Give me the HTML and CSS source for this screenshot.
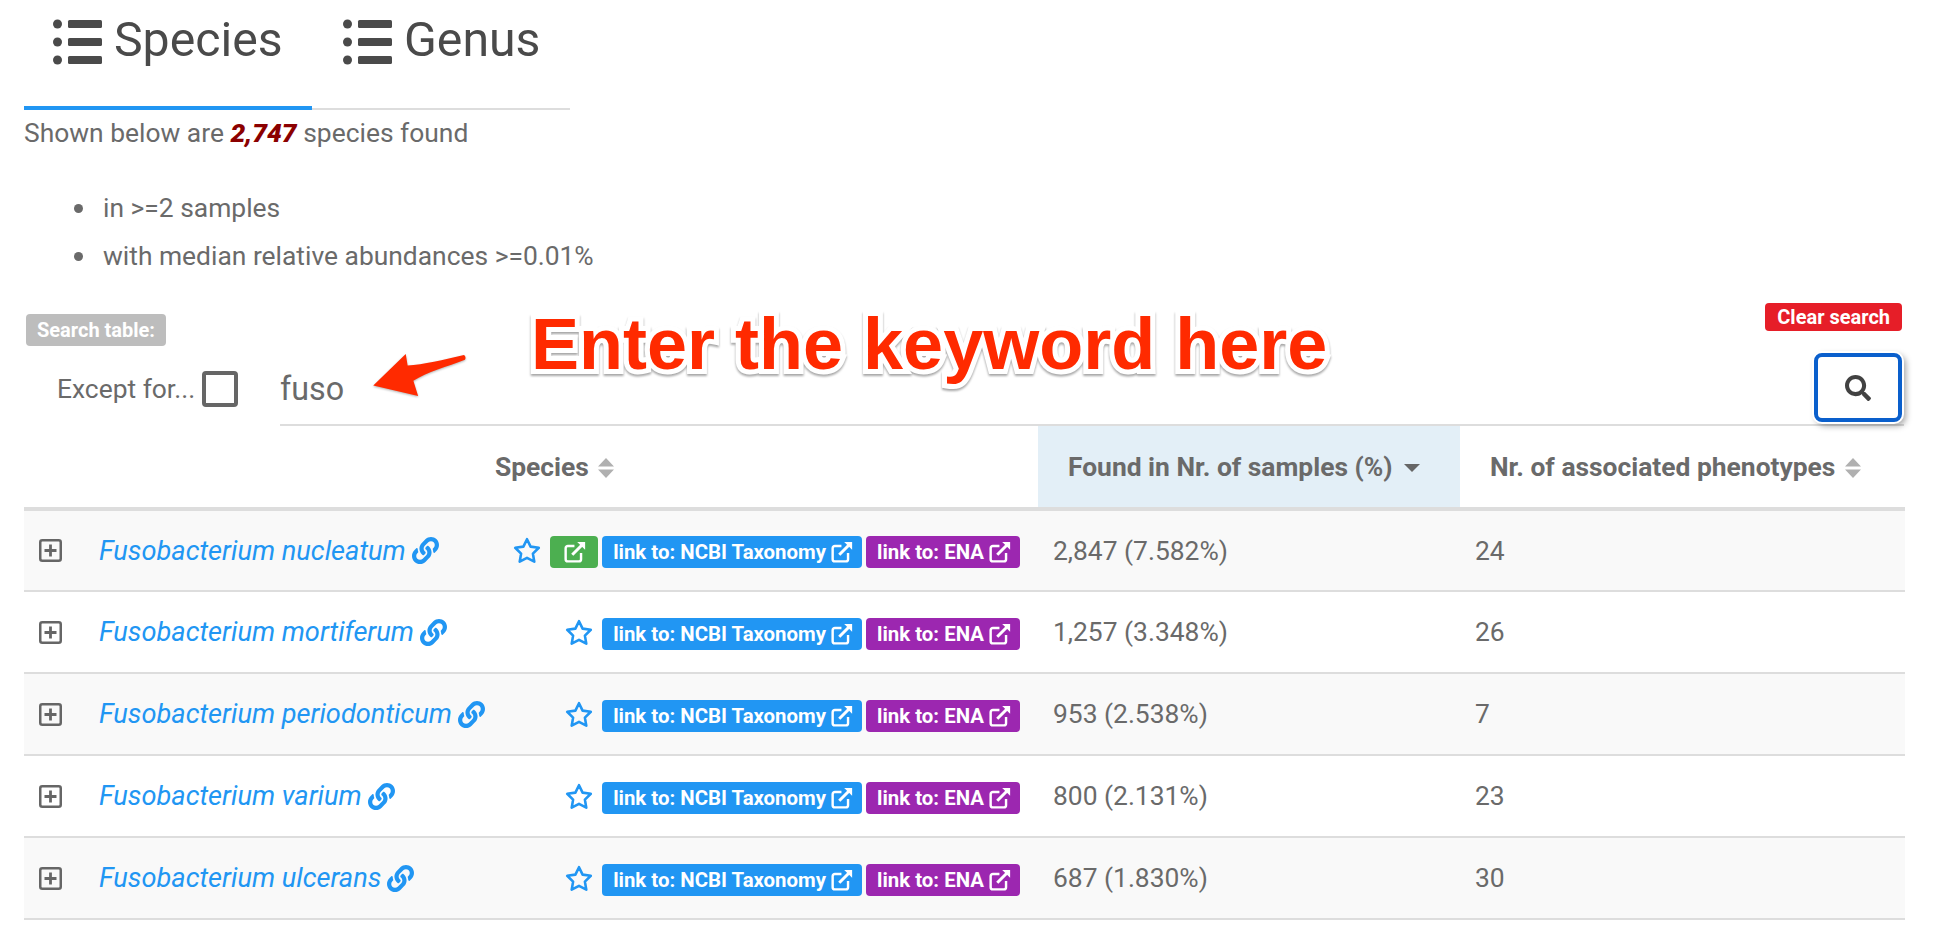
FILE: index.html
```html
<!DOCTYPE html>
<html>
  <head>
    <meta charset="utf-8">
    <title>Species</title>
    <link rel="stylesheet" href="styles.css">
  </head>
  <body>
    <svg class="defs" width="0" height="0">
      <symbol id="i-list" viewBox="0 0 49 46">
        <circle cx="4.5" cy="5" r="4.5"/><circle cx="4.5" cy="23" r="4.5"/><circle cx="4.5" cy="41" r="4.5"/>
        <rect x="15" y="1" width="34" height="8" rx="1.5"/><rect x="15" y="19" width="34" height="8" rx="1.5"/><rect x="15" y="37" width="34" height="8" rx="1.5"/>
      </symbol>
      <symbol id="i-link" viewBox="0 0 512 512">
        <path d="M326.612 185.391c59.747 59.809 58.927 155.698.36 214.59-.11.12-.24.25-.36.37l-67.2 67.2c-59.27 59.27-155.699 59.262-214.96 0-59.27-59.26-59.27-155.7 0-214.96l37.106-37.106c9.84-9.84 26.786-3.3 27.294 10.606.648 17.722 3.826 35.527 9.69 52.721 1.986 5.822.567 12.262-3.783 16.612l-13.087 13.087c-28.026 28.026-28.905 73.66-1.155 101.96 28.024 28.579 74.086 28.749 102.325.51l67.2-67.19c28.191-28.191 28.073-73.757 0-101.83-3.701-3.694-7.429-6.564-10.341-8.569a16.037 16.037 0 0 1-6.947-12.606c-.396-10.567 3.348-21.456 11.698-29.806l21.054-21.055c5.521-5.521 14.182-6.199 20.584-1.731a152.482 152.482 0 0 1 20.522 17.197zM467.547 44.449c-59.261-59.262-155.69-59.27-214.96 0l-67.2 67.2c-.12.12-.25.25-.36.37-58.566 58.892-59.387 154.781.36 214.59a152.454 152.454 0 0 0 20.521 17.196c6.402 4.468 15.064 3.789 20.584-1.731l21.054-21.055c8.35-8.35 12.094-19.239 11.698-29.806a16.037 16.037 0 0 0-6.947-12.606c-2.912-2.005-6.64-4.875-10.341-8.569-28.073-28.073-28.191-73.639 0-101.83l67.2-67.19c28.239-28.239 74.3-28.069 102.325.51 27.75 28.3 26.872 73.934-1.155 101.96l-13.087 13.087c-4.35 4.35-5.769 10.79-3.783 16.612 5.864 17.194 9.042 34.999 9.69 52.721.509 13.906 17.454 20.446 27.294 10.606l37.106-37.106c59.271-59.259 59.271-155.699.001-214.959z"/>
      </symbol>
      <symbol id="i-star" viewBox="0 0 28 27">
        <path d="M14 2.200l3.600 7.400 8.200 1.200-5.900 5.800 1.400 8.100-7.300-3.800-7.300 3.800 1.400-8.100-5.900-5.800 8.200-1.200z" fill="none" stroke="currentColor" stroke-width="2.600" stroke-linejoin="round"/>
      </symbol>
      <symbol id="i-ext" viewBox="0 0 20 20">
        <path d="M15.500 11v5.500a2 2 0 0 1-2 2h-10a2 2 0 0 1-2-2v-10a2 2 0 0 1 2-2h6" fill="none" stroke="currentColor" stroke-width="2.200"/>
        <path d="M7.500 12.500l10-10" fill="none" stroke="currentColor" stroke-width="2.800"/>
        <path d="M12 .8h7.200V8z" fill="currentColor"/>
      </symbol>
      <symbol id="i-sort" viewBox="0 0 16 22">
        <path d="M8 1l8 8.500H0zM8 21l-8-8.500h16z"/>
      </symbol>
      <symbol id="i-plus" viewBox="0 0 23 23">
        <rect x="1.250" y="1.250" width="20.500" height="20.500" rx="2" fill="none" stroke="currentColor" stroke-width="2.500"/>
        <path d="M11.500 5.500v12M5.500 11.500h12" fill="none" stroke="currentColor" stroke-width="2.800"/>
      </symbol>
      <symbol id="i-search" viewBox="0 0 512 512">
        <path d="M505 442.7L405.3 343c-4.5-4.5-10.6-7-17-7H372c27.6-35.3 44-79.7 44-128C416 93.1 322.9 0 208 0S0 93.1 0 208s93.1 208 208 208c48.3 0 92.7-16.4 128-44v16.3c0 6.4 2.5 12.5 7 17l99.7 99.7c9.4 9.4 24.6 9.4 33.9 0l28.3-28.3c9.4-9.4 9.4-24.6.1-34zM208 336c-70.7 0-128-57.2-128-128 0-70.7 57.2-128 128-128 70.7 0 128 57.2 128 128 0 70.7-57.2 128-128 128z"/>
      </symbol>
    </svg>

    <div class="tabs">
      <a class="tab active"><svg class="tab-icon"><use href="#i-list"/></svg>Species</a>
      <a class="tab"><svg class="tab-icon"><use href="#i-list"/></svg>Genus</a>
    </div>

    <p class="summary">Shown below are <b>2,747</b> species found</p>
    <ul class="filters">
      <li>in &gt;=2 samples</li>
      <li>with median relative abundances &gt;=0.01%</li>
    </ul>

    <div class="search">
      <div class="search-left">
        <span class="search-label">Search table:</span>
        <label class="except">Except for...<span class="checkbox"></span></label>
      </div>
      <div class="search-field">fuso</div>
      <div class="search-right">
        <span class="clear">Clear search</span>
        <span class="search-btn"><svg><use href="#i-search"/></svg></span>
      </div>

      <!-- annotation drawn on top of the screenshot -->
      <svg class="note-arrow" viewBox="0 0 100 44">
        <path d="M0 33L34 0 36 12C52 11 74 6 95 1 97 2 97 5 96 6 78 13 56 19 42 28L47 44Z"/>
      </svg>
      <div class="note-text">Enter the keyword here</div>
    </div>

    <table class="results">
      <thead>
        <tr>
          <th class="col-species">Species <svg class="sort"><use href="#i-sort"/></svg></th>
          <th class="col-found sorted">Found in Nr. of samples (%) <span class="caret"></span></th>
          <th class="col-pheno">Nr. of associated phenotypes <svg class="sort"><use href="#i-sort"/></svg></th>
        </tr>
      </thead>
      <tbody>
        <tr>
          <td>
            <div class="species">
              <svg class="plus"><use href="#i-plus"/></svg>
              <a class="name">Fusobacterium nucleatum</a><svg class="link"><use href="#i-link"/></svg>
              <span class="flex"></span>
              <svg class="star"><use href="#i-star"/></svg>
              <span class="badge green"><svg><use href="#i-ext"/></svg></span>
              <span class="badge blue">link to: NCBI Taxonomy <svg><use href="#i-ext"/></svg></span>
              <span class="badge purple">link to: ENA <svg><use href="#i-ext"/></svg></span>
            </div>
          </td>
          <td>2,847 (7.582%)</td>
          <td>24</td>
        </tr>
        <tr>
          <td>
            <div class="species">
              <svg class="plus"><use href="#i-plus"/></svg>
              <a class="name">Fusobacterium mortiferum</a><svg class="link"><use href="#i-link"/></svg>
              <span class="flex"></span>
              <svg class="star"><use href="#i-star"/></svg>
              <span class="badge blue">link to: NCBI Taxonomy <svg><use href="#i-ext"/></svg></span>
              <span class="badge purple">link to: ENA <svg><use href="#i-ext"/></svg></span>
            </div>
          </td>
          <td>1,257 (3.348%)</td>
          <td>26</td>
        </tr>
        <tr>
          <td>
            <div class="species">
              <svg class="plus"><use href="#i-plus"/></svg>
              <a class="name">Fusobacterium periodonticum</a><svg class="link"><use href="#i-link"/></svg>
              <span class="flex"></span>
              <svg class="star"><use href="#i-star"/></svg>
              <span class="badge blue">link to: NCBI Taxonomy <svg><use href="#i-ext"/></svg></span>
              <span class="badge purple">link to: ENA <svg><use href="#i-ext"/></svg></span>
            </div>
          </td>
          <td>953 (2.538%)</td>
          <td>7</td>
        </tr>
        <tr>
          <td>
            <div class="species">
              <svg class="plus"><use href="#i-plus"/></svg>
              <a class="name">Fusobacterium varium</a><svg class="link"><use href="#i-link"/></svg>
              <span class="flex"></span>
              <svg class="star"><use href="#i-star"/></svg>
              <span class="badge blue">link to: NCBI Taxonomy <svg><use href="#i-ext"/></svg></span>
              <span class="badge purple">link to: ENA <svg><use href="#i-ext"/></svg></span>
            </div>
          </td>
          <td>800 (2.131%)</td>
          <td>23</td>
        </tr>
        <tr>
          <td>
            <div class="species">
              <svg class="plus"><use href="#i-plus"/></svg>
              <a class="name">Fusobacterium ulcerans</a><svg class="link"><use href="#i-link"/></svg>
              <span class="flex"></span>
              <svg class="star"><use href="#i-star"/></svg>
              <span class="badge blue">link to: NCBI Taxonomy <svg><use href="#i-ext"/></svg></span>
              <span class="badge purple">link to: ENA <svg><use href="#i-ext"/></svg></span>
            </div>
          </td>
          <td>687 (1.830%)</td>
          <td>30</td>
        </tr>
      </tbody>
    </table>
  </body>
</html>
```

FILE: styles.css
```css
html, body {
  height: 100%;
}
body {
  margin: 0;
  padding: 0 34px 0 24px;
  box-sizing: border-box;
  background: #fff;
  color: #6a6a6a;
  font-family: Roboto, "Liberation Sans", sans-serif;
  font-size: 26.4px;
  overflow: hidden;
}
.defs {
  position: absolute;
}
.flex {
  flex: 1;
}

/* tabs */
.tabs {
  display: flex;
  width: 546px;
  height: 110px;
  box-sizing: border-box;
  border-bottom: 2px solid #ddd;
}
.tab {
  display: flex;
  align-items: flex-start;
  box-sizing: border-box;
  height: 110px;
  padding: 13px 0 0 29px;
  width: 288px;
  font-size: 48.2px;
  line-height: 54px;
  color: #4a4a4a;
}
.tab + .tab {
  padding-left: 31px;
  width: 258px;
}
.tab.active {
  border-bottom: 4px solid #2196f3;
}
.tab-icon {
  width: 49px;
  height: 46px;
  margin: 6px 12px 0 0;
  fill: #4a4a4a;
}

/* summary */
.summary {
  margin: 9px 0 0;
  line-height: 28px;
}
.summary b {
  font-style: italic;
  font-weight: 900;
  color: #8b0000;
}
.filters {
  margin: 37px 0 0;
  padding: 0 0 0 50px;
  list-style: none;
  line-height: 48px;
}
.filters li {
  display: flex;
  align-items: center;
  gap: 20px;
}
.filters li::before {
  content: "";
  width: 9px;
  height: 9px;
  border-radius: 50%;
  background: #6a6a6a;
}

/* search row */
.search {
  position: relative;
  display: flex;
  margin-top: 31px;
  height: 115px;
}
.search-left {
  width: 256px;
  flex: none;
}
.search-label {
  display: inline-block;
  margin: 3px 0 0 2px;
  padding: 0 11px;
  height: 32px;
  line-height: 32px;
  background: #bdbdbd;
  border-radius: 4px;
  color: #fff;
  font-size: 20px;
  font-weight: 700;
}
.except {
  display: flex;
  align-items: center;
  margin: 25px 0 0 33px;
  height: 36px;
}
.checkbox {
  width: 36px;
  height: 36px;
  margin-left: 7px;
  box-sizing: border-box;
  border: 4px solid #666;
  border-radius: 4px;
  flex: none;
}
.search-field {
  flex: 1;
  align-self: flex-end;
  height: 66px;
  line-height: 58px;
  font-size: 32.3px;
  box-sizing: border-box;
  border-bottom: 2px solid #ddd;
}
.search-right {
  position: absolute;
  right: 2px;
  top: 0;
  display: flex;
  flex-direction: column;
  align-items: flex-end;
}
.clear {
  margin-top: -8px;
  padding: 0 12px;
  height: 28px;
  line-height: 28px;
  background: #e61e28;
  border-radius: 4px;
  color: #fff;
  font-size: 20px;
  font-weight: 700;
}
.search-btn {
  display: flex;
  align-items: center;
  justify-content: center;
  box-sizing: border-box;
  margin-top: 22px;
  width: 88px;
  height: 69px;
  background: #fff;
  border: 4px solid #0a5fcc;
  border-radius: 8px;
  box-shadow: 0 0 0 2px #fff, 3px 3px 6px 1px rgba(0, 0, 0, .35);
}
.search-btn svg {
  width: 26px;
  height: 26px;
  fill: #424242;
}
.note-arrow {
  position: absolute;
  left: 349px;
  top: 43px;
  width: 96px;
  height: 42px;
  fill: #ff2a00;
  filter: drop-shadow(0 1px 1px rgba(0, 0, 0, .3));
}
.note-text {
  position: absolute;
  left: 507px;
  top: -9px;
  font-family: "Liberation Sans", sans-serif;
  font-size: 72px;
  font-weight: 700;
  line-height: 84px;
  white-space: nowrap;
  color: #ff2a00;
  -webkit-text-stroke: 10px #fff;
  paint-order: stroke fill;
  filter: drop-shadow(0 2px 1px rgba(0, 0, 0, .35));
}

/* table */
.results {
  width: 1881px;
  table-layout: fixed;
  border-collapse: collapse;
}
.results th {
  height: 83px;
  padding: 0 0 0 30px;
  box-sizing: border-box;
  border-bottom: 4px solid #ddd;
  text-align: left;
  font-weight: 700;
}
.results th.col-species {
  width: 1014px;
  padding-left: 471px;
}
.results th.col-found {
  width: 422px;
}
.results th.sorted {
  background: #e3eff7;
}
.sort {
  width: 16px;
  height: 22px;
  margin-left: 3px;
  vertical-align: -3px;
  fill: #b0b0b0;
}
.caret {
  display: inline-block;
  margin-left: 5px;
  vertical-align: 4px;
  border-left: 8px solid transparent;
  border-right: 8px solid transparent;
  border-top: 8px solid #666;
}
.results td {
  height: 82px;
  padding: 0 0 0 15px;
  box-sizing: border-box;
  border-bottom: 2px solid #ddd;
}
.results tbody tr:nth-child(odd) {
  background: #f9f9f9;
}
.species {
  display: flex;
  align-items: center;
  padding-right: 18px;
}
.plus {
  width: 23px;
  height: 23px;
  flex: none;
  color: #666;
}
.name {
  margin-left: 37px;
  font-size: 27.2px;
  font-style: italic;
  color: #2196f3;
}
.link {
  width: 27px;
  height: 27px;
  margin-left: 6px;
  flex: none;
  fill: #2196f3;
}
.star {
  width: 28px;
  height: 27px;
  flex: none;
  color: #2196f3;
}
.badge {
  display: flex;
  align-items: center;
  justify-content: center;
  box-sizing: border-box;
  height: 32px;
  margin: 3px 0 0 4px;
  padding: 0 9px 0 11px;
  border-radius: 4px;
  color: #fff;
  font-size: 20.4px;
  font-weight: 700;
  white-space: pre;
}
.badge svg {
  width: 22px;
  height: 22px;
}
.star + .badge {
  margin-left: 9px;
}
.green {
  width: 48px;
  background: #4caf50;
}
.blue {
  background: #2196f3;
}
.purple {
  background: #9c27b0;
}
```
